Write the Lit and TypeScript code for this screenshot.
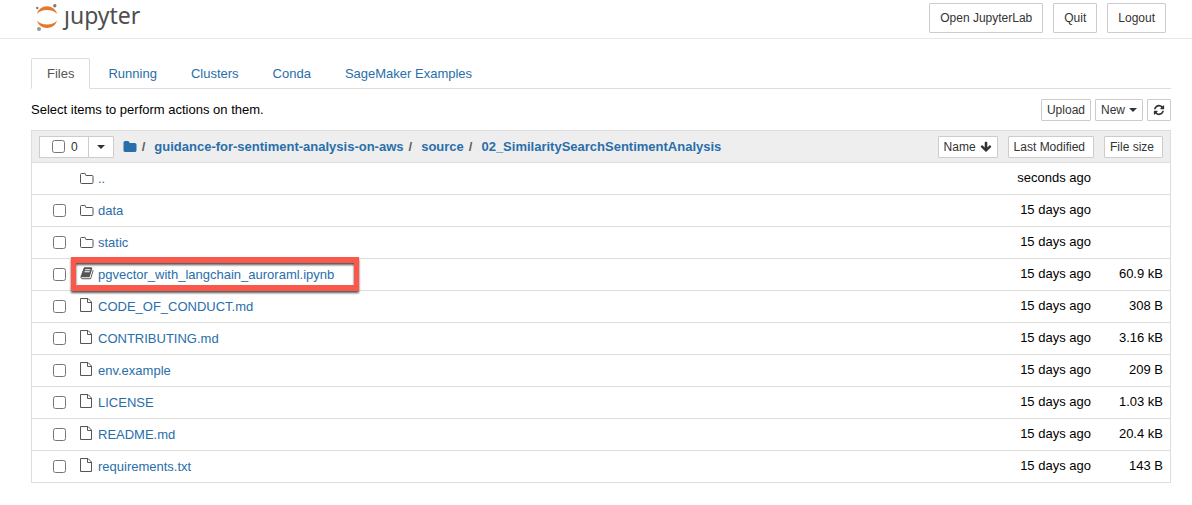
import { LitElement, html, css, svg, nothing } from "lit";
import { customElement, state } from "lit/decorators.js";

type Kind = "folder" | "notebook" | "file";

interface Entry {
  name: string;
  kind: Kind;
  modified: string;
  size: string;
  highlighted?: boolean;
}

const ENTRIES: Entry[] = [
  { name: "..", kind: "folder", modified: "seconds ago", size: "" },
  { name: "data", kind: "folder", modified: "15 days ago", size: "" },
  { name: "static", kind: "folder", modified: "15 days ago", size: "" },
  { name: "pgvector_with_langchain_auroraml.ipynb", kind: "notebook", modified: "15 days ago", size: "60.9 kB", highlighted: true },
  { name: "CODE_OF_CONDUCT.md", kind: "file", modified: "15 days ago", size: "308 B" },
  { name: "CONTRIBUTING.md", kind: "file", modified: "15 days ago", size: "3.16 kB" },
  { name: "env.example", kind: "file", modified: "15 days ago", size: "209 B" },
  { name: "LICENSE", kind: "file", modified: "15 days ago", size: "1.03 kB" },
  { name: "README.md", kind: "file", modified: "15 days ago", size: "20.4 kB" },
  { name: "requirements.txt", kind: "file", modified: "15 days ago", size: "143 B" },
];

const TABS = ["Files", "Running", "Clusters", "Conda", "SageMaker Examples"];
const CRUMBS = ["guidance-for-sentiment-analysis-on-aws", "source", "02_SimilaritySearchSentimentAnalysis"];

const PATHS = {
  folderSolid:
    "M1728 608v704q0 92-66 158t-158 66h-1216q-92 0-158-66t-66-158v-960q0-92 66-158t158-66h320q92 0 158 66t66 158v32h672q92 0 158 66t66 158z",
  refresh:
    "M1639 1056q0 5-1 7-64 268-268 434.5t-478 166.500q-146 0-282.500-55t-243.500-157l-129 129q-19 19-45 19t-45-19-19-45v-448q0-26 19-45t45-19h448q26 0 45 19t19 45-19 45l-137 137q71 66 161 102t187 36q134 0 250-65t186-179q11-17 53-117 8-23 30-23h192q13 0 22.500 9.500t9.500 22.500zm25-800v448q0 26-19 45t-45 19h-448q-26 0-45-19t-19-45 19-45l138-138q-148-137-349-137-134 0-250 65t-186 179q-11 17-53 117-8 23-30 23h-199q-13 0-22.500-9.500t-9.500-22.500v-7q65-268 270-434.500t480-166.500q146 0 284 55.500t245 156.500l130-129q19-19 45-19t45 19 19 45z",
  arrowDown:
    "M1675 832q0 53-37 90l-651 652q-39 37-91 37-53 0-90-37l-651-652q-38-36-38-90 0-53 38-91l74-75q39-37 91-37 53 0 90 37l294 294v-704q0-52 38-90t90-38h128q52 0 90 38t38 90v704l294-294q37-37 90-37 52 0 91 37l75 75q37 39 37 91z",
  book:
    "M1703 478q40 57 18 129l-275 906q-19 64-76.500 107.500t-122.500 43.500h-923q-77 0-148.500-53.500t-99.500-131.500q-24-67-2-127 0-4 3-27t4-37q1-8-3-21.500t-3-19.500q2-11 8-21t16.500-23.500 16.500-23.500q23-38 45-91.500t30-91.500q3-10 .5-30t-.5-28q3-11 17-28t17-23q21-36 42-92t25-90q1-9-2.500-32t.5-28q4-13 22-30.500t22-22.500q19-26 42.500-84.500t27.500-96.500q1-8-3-25.500t-2-26.500q2-8 9-18t18-23 17-21q8-12 16.500-30.500t15-35 16-36 19.500-32 26.500-23.500 36-11.500 47.500 5.500l-1 3q38-9 51-9h761q74 0 114 56t18 130l-274 906q-36 119-71.500 153.500t-128.500 34.500h-869q-27 0-38 15-11 16-1 43 24 70 144 70h923q29 0 56-15.500t35-41.500l300-987q7-22 5-57 38 15 59 43zm-1064 2q-4 13 2 22.500t20 9.500h608q13 0 25.500-9.500t16.500-22.500l21-64q4-13-2-22.500t-20-9.500h-608q-13 0-25.500 9.500t-16.500 22.500zm-83 256q-4 13 2 22.500t20 9.500h608q13 0 25.500-9.500t16.500-22.500l21-64q4-13-2-22.500t-20-9.500h-608q-13 0-25.500 9.500t-16.500 22.500z",
};

const glyph = (d: string, size: number) => html`
  <svg class="glyph" width=${size} height=${size} viewBox="0 0 1792 1792" aria-hidden="true">${svg`<path d=${d}></path>`}</svg>
`;

const caret = html`
  <svg class="glyph" width="8" height="4" viewBox="0 0 8 4" aria-hidden="true"><path d="M0 0h8L4 4z"></path></svg>
`;

const kindIcon = (kind: Kind) => {
  if (kind === "folder") {
    return html`<svg class="kind" width="14" height="16" viewBox="0 0 14 16" aria-hidden="true">
      <path class="line" d="M1.500 2.500h3.300q.8 0 .8.8v.7q0 .5.5.5h5.900q1 0 1 1v6q0 1-1 1h-10.500q-1 0-1-1v-8q0-1 1-1z"></path>
    </svg>`;
  }
  if (kind === "notebook") {
    return html`<svg class="kind" width="14" height="16" viewBox="0 96 1792 2048" aria-hidden="true">
      <path d=${PATHS.book}></path>
    </svg>`;
  }
  return html`<svg class="kind" width="14" height="18" viewBox="0 0 14 18" aria-hidden="true">
    <path class="line" d="M.5.5h7.500l3.500 3.500v9.500h-11zM7.500.5v4h4"></path>
  </svg>`;
};

@customElement("app-root")
export class AppRoot extends LitElement {
  @state() private tab = "Files";
  @state() private picked = new Set<string>();

  static styles = css`
    :host {
      display: block;
      min-height: 100vh;
      background: #fff;
      color: #000;
      font: 13px/20px "Liberation Sans", Arial, sans-serif;
    }
    * {
      box-sizing: border-box;
    }
    a {
      color: #296eaa;
      text-decoration: none;
    }
    .glyph {
      display: block;
      flex: none;
      fill: currentColor;
    }
    .btn {
      display: inline-flex;
      align-items: center;
      justify-content: center;
      gap: 4px;
      height: 22px;
      margin: 0;
      padding: 0 5px;
      border: 1px solid #ccc;
      border-radius: 1px;
      background: #fff;
      color: #333;
      font: inherit;
      font-size: 12px;
      white-space: nowrap;
      cursor: pointer;
    }
    .btn.large {
      height: 30px;
      padding: 0 10px;
    }
    .btn.sort {
      padding-right: 8px;
    }
    .top {
      display: flex;
      justify-content: space-between;
      height: 39px;
      padding: 3px 26px 0 34px;
      border-bottom: 1px solid #e7e7e7;
    }
    .brand {
      display: flex;
      align-items: flex-start;
      gap: 4px;
      color: #4e4e4e;
      font: 23px/24px "Noto Sans", "Open Sans", sans-serif;
    }
    .brand svg {
      flex: none;
    }
    .session {
      display: flex;
      gap: 10px;
    }
    .page {
      padding: 19px 21px 22px 31px;
    }
    .tabs {
      display: flex;
      gap: 2px;
      border-bottom: 1px solid #ddd;
    }
    .tab {
      height: 31px;
      margin: 0 0 -1px;
      padding: 0 15px;
      border: 1px solid transparent;
      border-radius: 2px 2px 0 0;
      background: none;
      color: #296eaa;
      font: inherit;
      cursor: pointer;
    }
    .tab[aria-selected="true"] {
      border-color: #ddd;
      border-bottom-color: #fff;
      background: #fff;
      color: #555;
    }
    .toolbar {
      display: flex;
      align-items: center;
      justify-content: space-between;
      padding: 10px 0 9px;
    }
    .actions {
      display: flex;
      gap: 4px;
    }
    .files {
      width: 100%;
      border-collapse: collapse;
      border: 1px solid #ddd;
    }
    .files th,
    .files td {
      height: 32px;
      padding: 0;
      border-bottom: 1px solid #ddd;
      text-align: right;
      white-space: nowrap;
    }
    .files th {
      background: #eee;
      font-weight: normal;
    }
    .files th:first-child,
    .files td:first-child {
      width: 100%;
      text-align: left;
    }
    .files th + th {
      padding: 0 5px;
    }
    .files th + th + th {
      padding: 0 7px 0 5px;
    }
    .files td + td {
      padding: 0 8px 2px;
    }
    .files td + td + td {
      padding: 0 7px 2px 5px;
    }
    .location {
      display: flex;
      align-items: center;
      padding: 0 5px 0 7px;
    }
    .select {
      display: flex;
    }
    .count {
      display: flex;
      align-items: center;
      gap: 6px;
      height: 22px;
      padding: 0 10px 0 12px;
      border: 1px solid #ccc;
      background: #fff;
      color: #333;
      font-size: 12px;
    }
    .select .btn {
      width: 26px;
      margin-left: -1px;
    }
    .check {
      width: 13px;
      height: 13px;
      margin: 0;
    }
    .crumbs {
      display: flex;
      flex: 1;
      align-items: center;
      margin: 0;
      padding: 0 0 0 9px;
      list-style: none;
      font-weight: bold;
    }
    .crumbs li {
      display: flex;
      align-items: center;
    }
    .sep {
      padding: 0 9px 0 5px;
      color: #5e5e5e;
    }
    .entry {
      display: flex;
      align-items: center;
      padding-left: 21px;
    }
    .slot {
      display: flex;
      width: 27px;
    }
    .item {
      position: relative;
      display: flex;
      align-items: center;
      gap: 4px;
      height: 20px;
    }
    .kind {
      flex: none;
      fill: #555;
    }
    .line {
      fill: none;
      stroke: #555;
      stroke-width: 1;
    }
    .mark {
      position: absolute;
      inset: -8px -25px -6px -9px;
      border: 6px solid #f9584b;
      border-width: 6px 5px;
      filter: drop-shadow(0 2px 1px #555);
      pointer-events: none;
    }
  `;

  private toggle(name: string) {
    const next = new Set(this.picked);
    if (!next.delete(name)) next.add(name);
    this.picked = next;
  }

  private toggleAll(event: Event) {
    const on = (event.target as HTMLInputElement).checked;
    this.picked = new Set(on ? ENTRIES.slice(1).map((e) => e.name) : []);
  }

  private renderEntry(entry: Entry) {
    return html`
      <tr>
        <td>
          <div class="entry">
            <span class="slot">
              ${entry.name === ".."
                ? nothing
                : html`<input
                    class="check"
                    type="checkbox"
                    aria-label=${entry.name}
                    .checked=${this.picked.has(entry.name)}
                    @change=${() => this.toggle(entry.name)}
                  />`}
            </span>
            <span class="item">
              ${kindIcon(entry.kind)}
              <a href="#">${entry.name}</a>
              ${entry.highlighted ? html`<span class="mark"></span>` : nothing}
            </span>
          </div>
        </td>
        <td>${entry.modified}</td>
        <td>${entry.size}</td>
      </tr>
    `;
  }

  render() {
    return html`
      <header class="top">
        <div class="brand">
          <svg width="26" height="28" viewBox="34 3 26 28" aria-hidden="true">
            <path fill="#e8772e" d="M36.800 14Q39.500 6.300 47 6.300T57.200 14Q53.500 10 47 10T36.800 14zM36.800 20.500Q39.500 28 47 28T57.200 20.500Q53.500 24.500 47 24.500T36.800 20.500z"></path>
            <circle cx="37.300" cy="8" r="1.200" fill="#7a7a7a"></circle>
            <circle cx="54.800" cy="5.700" r="1.700" fill="#7a7a7a"></circle>
            <circle cx="39" cy="29" r="2" fill="#999"></circle>
          </svg>
          <span>ȷupyter</span>
        </div>
        <div class="session">
          <button class="btn large">Open JupyterLab</button>
          <button class="btn large">Quit</button>
          <button class="btn large">Logout</button>
        </div>
      </header>
      <main class="page">
        <div class="tabs" role="tablist">
          ${TABS.map(
            (t) => html`<button class="tab" role="tab" aria-selected=${t === this.tab} @click=${() => (this.tab = t)}>${t}</button>`
          )}
        </div>
        <div class="toolbar">
          <span>Select items to perform actions on them.</span>
          <div class="actions">
            <button class="btn">Upload</button>
            <button class="btn">New ${caret}</button>
            <button class="btn" aria-label="Refresh">${glyph(PATHS.refresh, 12)}</button>
          </div>
        </div>
        <table class="files">
          <thead>
            <tr>
              <th>
                <div class="location">
                  <div class="select">
                    <label class="count">
                      <input class="check" type="checkbox" @change=${this.toggleAll} />
                      ${this.picked.size}
                    </label>
                    <button class="btn" aria-label="Select by type">${caret}</button>
                  </div>
                  <ul class="crumbs">
                    <li><a href="#" aria-label="Root">${glyph(PATHS.folderSolid, 14)}</a></li>
                    ${CRUMBS.map((c) => html`<li><span class="sep">/</span><a href="#">${c}</a></li>`)}
                  </ul>
                  <button class="btn">Name ${glyph(PATHS.arrowDown, 12)}</button>
                </div>
              </th>
              <th><button class="btn sort">Last Modified</button></th>
              <th><button class="btn sort">File size</button></th>
            </tr>
          </thead>
          <tbody>
            ${ENTRIES.map((e) => this.renderEntry(e))}
          </tbody>
        </table>
      </main>
    `;
  }
}
